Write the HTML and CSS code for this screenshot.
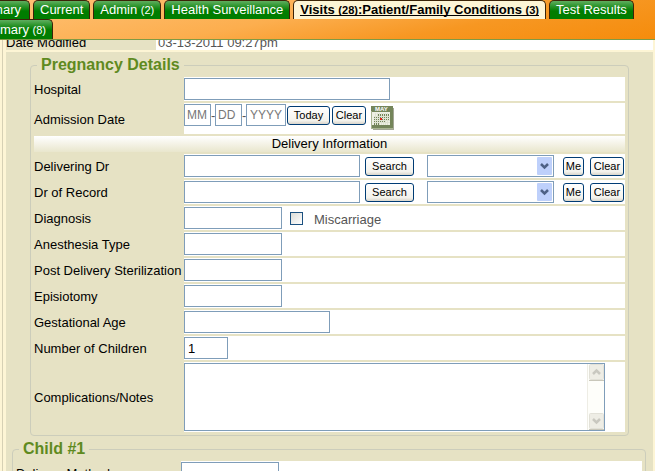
FILE: index.html
```html
<!DOCTYPE html>
<html lang="en">
<head>
<meta charset="utf-8">
<title>Pregnancy Details</title>
<link rel="stylesheet" href="styles.css">
</head>
<body>
<header class="top">
  <nav class="tabs">
    <a class="tab tab-cut" href="#">mary</a>
    <a class="tab" href="#">Current</a>
    <a class="tab" href="#">Admin <small>(2)</small></a>
    <a class="tab" href="#">Health Surveillance</a>
    <a class="tab tab-active" href="#"><span>Visits <small>(28)</small>:Patient/Family Conditions <small>(3)</small></span></a>
    <a class="tab" href="#">Test Results</a>
  </nav>
  <nav class="tabs tabs-second">
    <a class="tab tab-first" href="#">mary <small>(8)</small></a>
  </nav>
</header>
<main class="page">
  <div class="modified">
    <span class="modified-label">Date Modified</span>
    <span class="modified-value">03-13-2011 09:27pm</span>
  </div>
  <div class="content">
    <fieldset class="group group-inner">
      <legend>Pregnancy Details</legend>
      <div class="rows">
        <div class="row"><label for="hospital">Hospital</label><div class="cell"><input class="text w-hospital" id="hospital" type="text"></div></div>
        <div class="row"><label for="month">Admission Date</label>
          <div class="cell cell-date">
            <input class="text w-part" id="month" type="text" placeholder="MM"><span class="dash">-</span><input class="text w-part" type="text" placeholder="DD" aria-label="Day"><span class="dash">-</span><input class="text w-year" type="text" placeholder="YYYY" aria-label="Year">
            <button class="btn btn-today" type="button">Today</button>
            <button class="btn btn-clear" type="button">Clear</button>
            <button class="calendar" type="button" aria-label="Calendar">
              <svg width="23" height="24" viewBox="0 0 23 24" shape-rendering="crispEdges">
                <path d="M2 2h21v22H2z" fill="#a3a696"/>
                <path d="M0 0h22v22H0z" fill="#74855a"/>
                <path d="M1 6h18v13H1z" fill="#eef0e4"/>
                <path d="M0 5v17h22" fill="none" stroke="#a9b591"/>
                <text x="10.500" y="5" text-anchor="middle" font-size="6" font-weight="bold" fill="#fff">MAY</text>
                <path d="M7 8h11v7h-4v2H9v2H3v-8h4z" fill="#74855a"/>
                <path d="M3 10.500h16M3 12.500h16M3 14.500h16M3 16.500h16M6.500 7v12M8.500 7v12M10.500 7v12M12.500 7v12M14.500 7v12M16.500 7v12M4.500 7v12" stroke="#dfe3d2"/>
                <path d="M9 12h2v2H9z" fill="#e02018"/>
              </svg>
            </button>
          </div>
        </div>
        <h2 class="band">Delivery Information</h2>
        <div class="row"><label for="dr">Delivering Dr</label>
          <div class="cell">
            <input class="text w-doctor" id="dr" type="text">
            <button class="btn btn-search" type="button">Search</button>
            <span class="pick"><select aria-label="Delivering Dr choice"></select><svg width="15" height="18" viewBox="0 0 15 18"><rect width="15" height="18" rx="1" fill="#bed0fb"/><path d="M4 7l3.500 3.500L11 7" fill="none" stroke="#4d6185" stroke-width="2.500"/></svg></span>
            <button class="btn btn-me" type="button">Me</button>
            <button class="btn btn-clear" type="button">Clear</button>
          </div>
        </div>
        <div class="row"><label for="record">Dr of Record</label>
          <div class="cell">
            <input class="text w-doctor" id="record" type="text">
            <button class="btn btn-search" type="button">Search</button>
            <span class="pick"><select aria-label="Dr of Record choice"></select><svg width="15" height="18" viewBox="0 0 15 18"><rect width="15" height="18" rx="1" fill="#bed0fb"/><path d="M4 7l3.500 3.500L11 7" fill="none" stroke="#4d6185" stroke-width="2.500"/></svg></span>
            <button class="btn btn-me" type="button">Me</button>
            <button class="btn btn-clear" type="button">Clear</button>
          </div>
        </div>
        <div class="row"><label for="diagnosis">Diagnosis</label>
          <div class="cell">
            <input class="text w-short" id="diagnosis" type="text">
            <input class="check" id="miscarriage" type="checkbox">
            <label class="check-label" for="miscarriage">Miscarriage</label>
          </div>
        </div>
        <div class="row"><label for="anesthesia">Anesthesia Type</label><div class="cell"><input class="text w-short" id="anesthesia" type="text"></div></div>
        <div class="row"><label for="sterilization">Post Delivery Sterilization</label><div class="cell"><input class="text w-short" id="sterilization" type="text"></div></div>
        <div class="row"><label for="episiotomy">Episiotomy</label><div class="cell"><input class="text w-short" id="episiotomy" type="text"></div></div>
        <div class="row"><label for="age">Gestational Age</label><div class="cell"><input class="text w-age" id="age" type="text"></div></div>
        <div class="row"><label for="children">Number of Children</label><div class="cell"><input class="text w-count" id="children" type="text" value="1"></div></div>
        <div class="row"><label for="notes">Complications/Notes</label>
          <div class="cell">
            <div class="notes">
              <textarea id="notes"></textarea>
              <div class="scroll">
                <svg width="15" height="17" viewBox="0 0 15 17"><rect x=".5" y=".5" width="14" height="15" rx="1" fill="#eeede5" stroke="#e2e1d8"/><path d="M0 16.500h15" stroke="#c9c7ba"/><path d="M4 10l3.500-3.500L11 10" fill="none" stroke="#c9c8c0" stroke-width="2.500"/></svg>
                <svg width="15" height="17" viewBox="0 0 15 17"><rect x=".5" y=".5" width="14" height="15" rx="1" fill="#eeede5" stroke="#e2e1d8"/><path d="M0 16.500h15" stroke="#c9c7ba"/><path d="M4 6l3.500 3.500L11 6" fill="none" stroke="#c9c8c0" stroke-width="2.500"/></svg>
              </div>
            </div>
          </div>
        </div>
      </div>
    </fieldset>
    <fieldset class="group group-child">
      <legend>Child #1</legend>
      <div class="rows">
        <div class="row"><label for="method">Delivery Method</label><div class="cell"><input class="text w-short" id="method" type="text"></div></div>
      </div>
    </fieldset>
  </div>
</main>
</body>
</html>
```
FILE: styles.css
```css
* { box-sizing: border-box; }
html, body { height: 100%; }
body {
  margin: 0;
  overflow: hidden;
  background: #fdf5d5;
  color: #000;
  font: 13px/16px "Liberation Sans", Arial, sans-serif;
}
.top {
  height: 40px;
  border-bottom: 1px solid #7f9a45;
  background: linear-gradient(170deg, #ffc277 0%, #fcae4e 45%, #f79722 70%, #f58c0c 100%);
}
.tabs { display: flex; gap: 3px; height: 19px; }
.tabs-second { height: 20px; }
.tab {
  flex-shrink: 0;
  padding: 0 6px;
  border: 1px solid #3b2408;
  border-width: 1px 1px 0;
  border-radius: 5px 5px 0 0;
  background: linear-gradient(#5fae5f 0, #249024 6px, #007d00 10px);
  color: #fff;
  font-size: 13px;
  line-height: 17px;
  text-decoration: none;
  white-space: nowrap;
}
.tabs-second .tab { line-height: 20px; }
.tab small { font-size: 11px; }
.tab-cut {
  display: flex;
  justify-content: flex-end;
  width: 30px;
  padding: 0 8px 0 0;
  border-left: 0;
  border-top-left-radius: 0;
  overflow: hidden;
}
.tab-first { padding-left: 0; border-left: 0; border-top-left-radius: 0; }
.tab-active { background: #fdf5d5; color: #000; font-weight: bold; }
.tab-active span { display: inline-block; height: 15px; line-height: 17px; border-bottom: 1px solid #000; }
.page { margin: 0 2px; border-left: 1px solid #d6d0b4; padding-left: 3px; }
.modified {
  display: flex;
  align-items: flex-end;
  height: 10px;
  overflow: hidden;
  background: #e6e2c4;
  line-height: 14px;
}
.modified-label { width: 150px; }
.modified-value { flex: 1; padding-left: 2px; background: #fff; color: #555; }
.content { margin-top: 2px; padding: 3px 0; background: #e6e2c4; }
.group { min-width: 0; border: 1px solid #cccdbb; border-radius: 4px; padding: 2px 3px 3px; }
.group-inner { margin: 0 24px; }
.group-child { margin: 3px 7px 0 6px; }
legend { margin-left: 3px; padding: 0 4px; color: #5f8a1f; font-size: 16px; font-weight: bold; line-height: 20px; }
.rows { display: grid; gap: 2px; }
.row { display: grid; grid-template-columns: 150px 1fr; align-items: center; }
.group-child .row { grid-template-columns: 165px 1fr; }
.row label { padding-top: 2px; white-space: nowrap; }
.cell { display: flex; align-items: center; min-height: 24px; padding: 1px 0; background: #fff; }
.cell-date { align-items: flex-start; min-height: 31px; }
.text {
  height: 22px;
  margin: 0;
  padding: 0 3px;
  border: 1px solid #7f9db9;
  border-radius: 0;
  background: #fff;
  color: #000;
  font: inherit;
}
.text::placeholder { color: #777; opacity: 1; }
.w-hospital { width: 206px; }
.w-part { width: 27px; padding: 0 2px; font-size: 12px; }
.w-year { width: 40px; padding: 0 3px; font-size: 12px; }
.w-doctor { width: 176px; }
.w-short { width: 98px; }
.w-age { width: 146px; }
.w-count { width: 44px; }
.dash { width: 4px; line-height: 24px; color: #555; }
.btn {
  height: 19px;
  padding: 0;
  border: 1px solid #003c74;
  border-radius: 3px;
  background: linear-gradient(#fff, #f3f2ec 80%, #d9d5cb);
  color: #000;
  font: 11px/15px "Liberation Sans", Arial, sans-serif;
}
.cell-date .btn { margin-top: 2px; }
.btn-today { width: 43px; margin-left: 1px; }
.btn-clear { width: 34px; }
.btn-today + .btn-clear { margin-left: 2px; }
.btn-search { width: 49px; margin-left: 5px; }
.btn-me { width: 21px; margin: 0 6px 0 9px; }
.calendar { margin: 2px 0 0 5px; padding: 0; border: 0; background: none; font: inherit; }
.calendar svg { display: block; }
.pick { position: relative; width: 127px; height: 22px; margin-left: 13px; }
.pick select { display: block; width: 100%; height: 22px; appearance: none; border: 1px solid #7f9db9; border-radius: 0; background: #fff; }
.pick svg { position: absolute; top: 2px; right: 2px; pointer-events: none; }
.band {
  margin: 0;
  background: linear-gradient(#fff, #e9e6cd);
  font-size: 13px;
  font-weight: normal;
  line-height: 16px;
  text-align: center;
}
.check { appearance: none; width: 13px; height: 13px; margin: 0 11px 0 8px; border: 1px solid #1c5180; background: linear-gradient(135deg, #dcdcd7, #fff); }
.cell .check-label { padding-top: 4px; color: #555; }
.notes { position: relative; width: 421px; height: 68px; }
.notes textarea { display: block; width: 100%; height: 100%; resize: none; border: 1px solid #7f9db9; border-radius: 0; background: #fff; font: inherit; }
.scroll {
  position: absolute;
  inset: 1px 1px 1px auto;
  display: flex;
  flex-direction: column;
  justify-content: space-between;
  width: 17px;
  padding-left: 1px;
  border-left: 1px solid #eeede5;
  background: #fefefa;
}
```
